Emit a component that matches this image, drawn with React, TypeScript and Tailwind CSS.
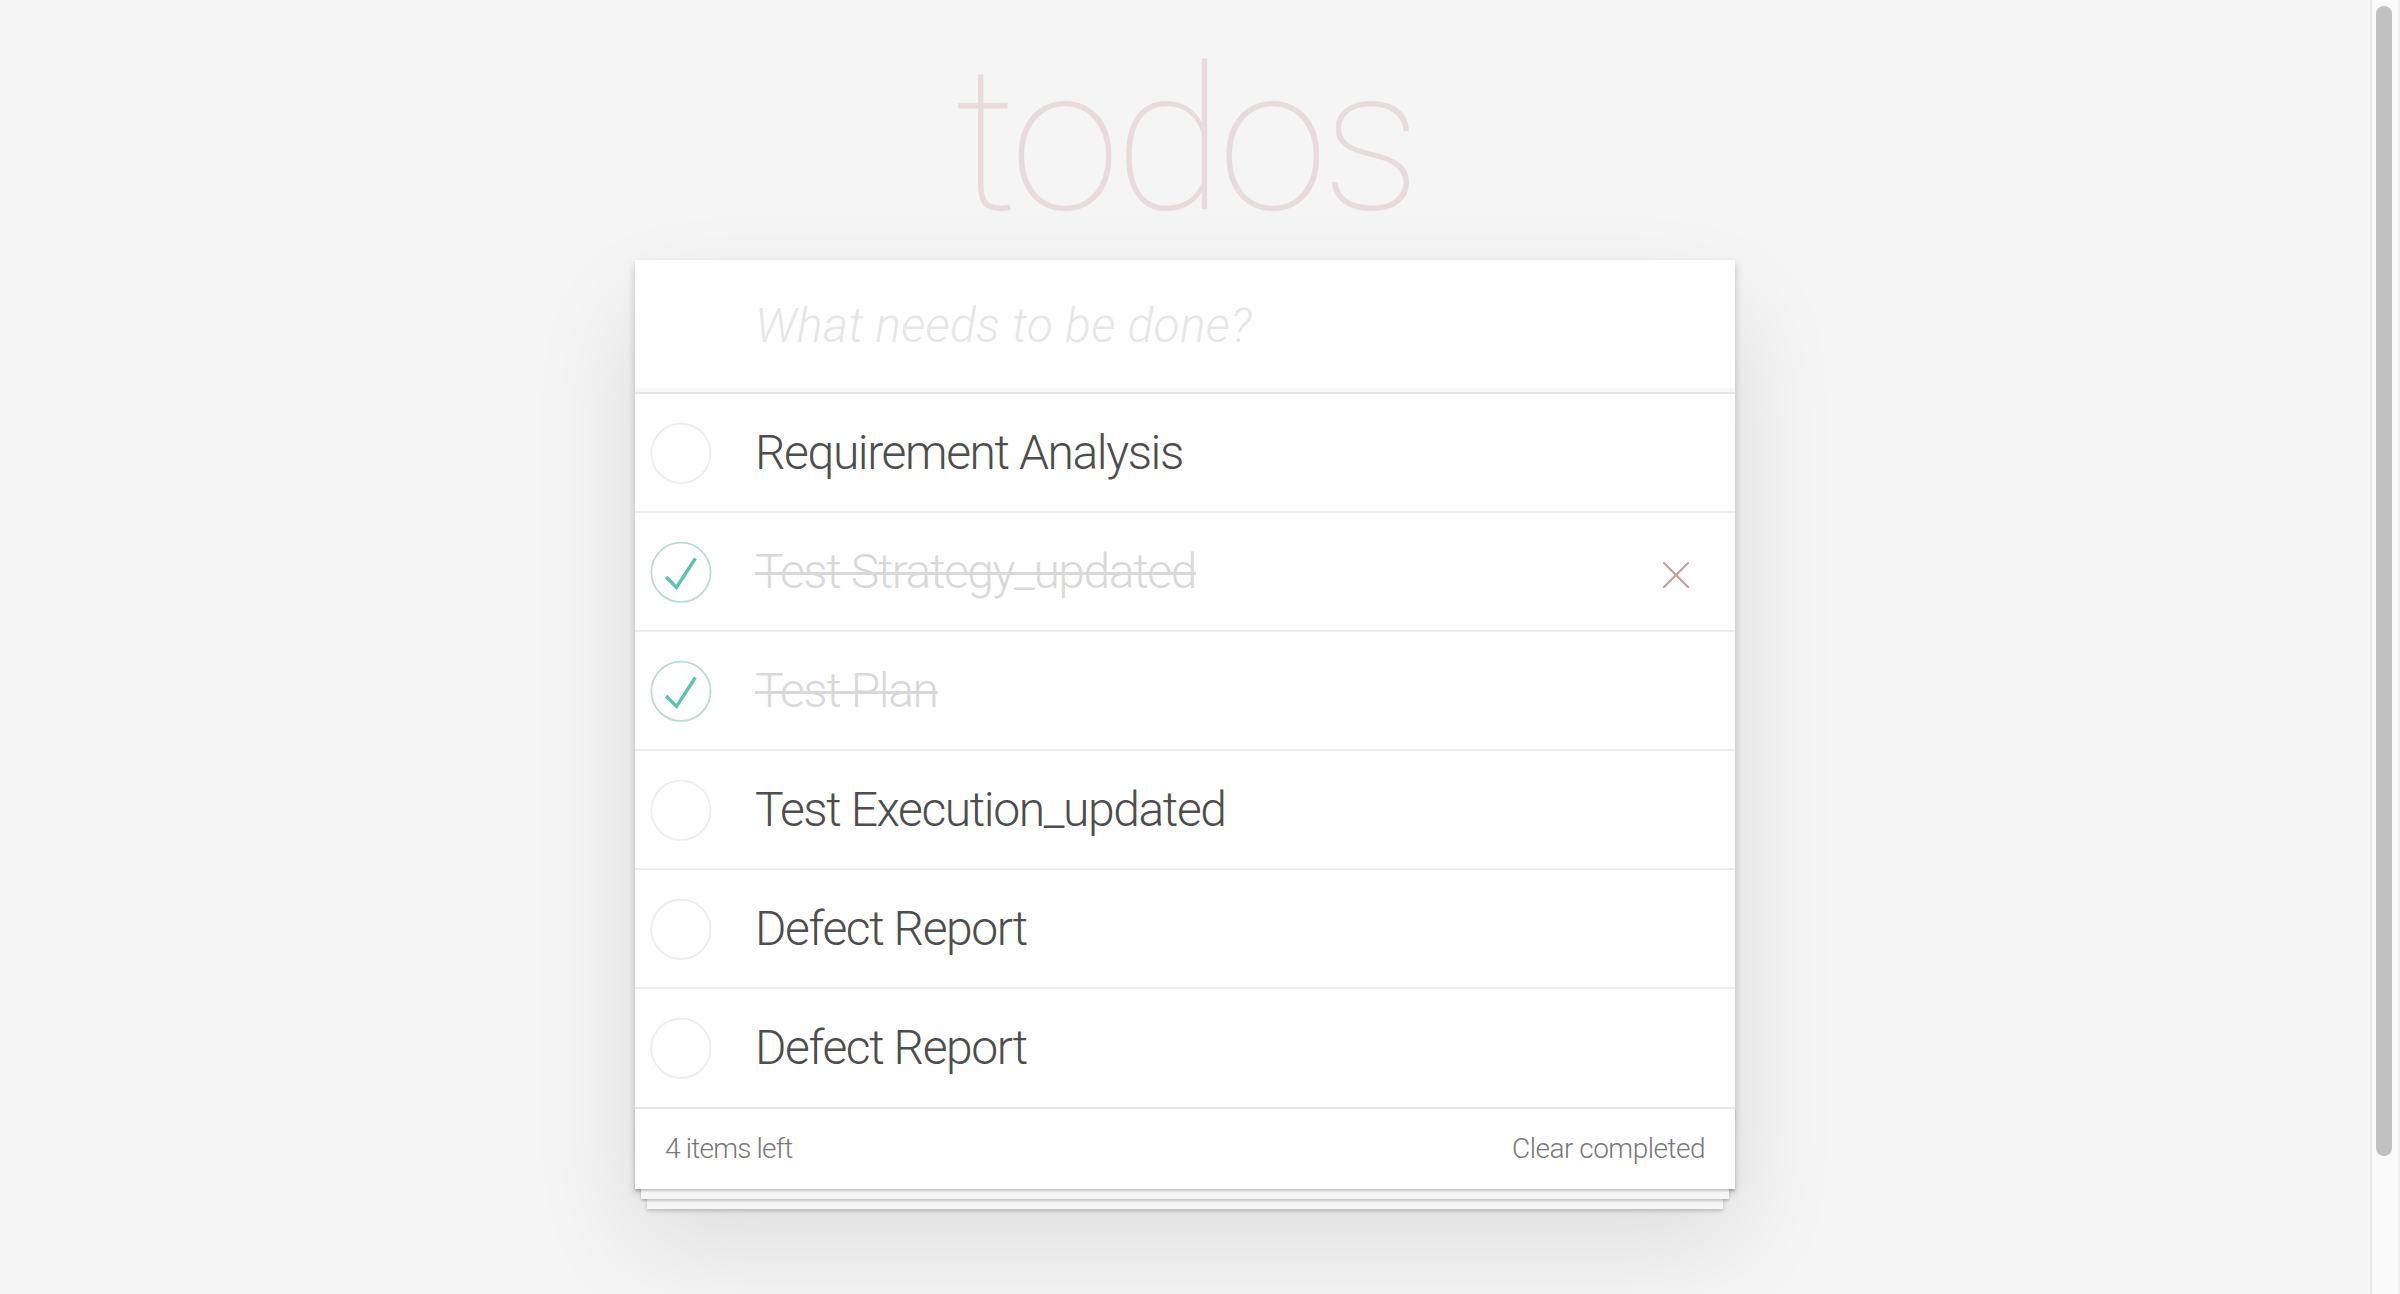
import React from 'react';

interface Todo {
  title: string;
  completed: boolean;
}

const todos: Todo[] = [
  { title: 'Requirement Analysis', completed: false },
  { title: 'Test Strategy_updated', completed: true },
  { title: 'Test Plan', completed: true },
  { title: 'Test Execution_updated', completed: false },
  { title: 'Defect Report', completed: false },
  { title: 'Defect Report', completed: false },
];

// same drawing as the todomvc toggle background, at 2x
const Toggle = ({ checked }: { checked: boolean }) => (
  <svg width="80" height="80" viewBox="-10 -18 100 135" className="shrink-0">
    <circle cx="50" cy="50" r="50" fill="none" stroke={checked ? '#bddad5' : '#ededed'} strokeWidth="3" />
    {checked && <path fill="#5dc2af" d="M72 25L42 71 27 56l-4 4 20 20 34-52z" />}
  </svg>
);

const Destroy = () => (
  <svg width="26" height="26" viewBox="0 0 26 26" className="ml-auto mr-[46px] mt-[6px] shrink-0">
    <path d="M1 1L25 25M25 1L1 25" stroke="#cc9a9a" strokeWidth="2.2" strokeLinecap="round" />
  </svg>
);

const TodoItem = ({ todo, last, hovered }: { todo: Todo; last: boolean; hovered: boolean }) => {
  return (
    <li className={`flex items-center ${last ? 'h-[118px]' : 'h-[119px] border-b-2 border-[#ededed]'}`}>
      <Toggle checked={todo.completed} />
      <label
        className={`pl-[40px] text-[48px] leading-[1.2] font-light tracking-[-1.4px] whitespace-nowrap ${
          todo.completed ? 'text-[#d9d9d9] line-through decoration-[3px] decoration-[#d9d9d9]' : 'text-[#4d4d4d]'
        }`}
      >
        {todo.title}
      </label>
      {hovered && <Destroy />}
    </li>
  );
};

const App = () => {
  const left = todos.filter((t) => !t.completed).length;
  return (
    <div className="flex h-[1294px] overflow-hidden bg-[#f5f5f5] font-['Roboto','Helvetica_Neue',Arial,sans-serif]">
      <main className="flex-1 flex flex-col items-center">
        <h1 className="h-[260px] pt-[41px] text-[200px] leading-[200px] font-thin tracking-[-6px] text-[#e9dbdb] text-center">
          todos
        </h1>
        <section className="w-[1100px] bg-white shadow-[0_4px_8px_0_rgba(0,0,0,0.2),0_50px_100px_0_rgba(0,0,0,0.1)]">
          <div className="h-[132px] flex items-center pl-[120px] pr-[32px] shadow-[inset_0_-4px_2px_rgba(0,0,0,0.03)]">
            <span className="text-[48px] italic font-light tracking-[0.3px] text-[#e6e6e6]">What needs to be done?</span>
          </div>
          <ul className="border-t-2 border-[#e6e6e6]">
            {todos.map((todo, i) => (
              <TodoItem key={i} todo={todo} last={i === todos.length - 1} hovered={i === 1} />
            ))}
          </ul>
          <footer className="h-[82px] flex items-center justify-between px-[30px] border-t-2 border-[#e6e6e6] bg-white text-[28px] font-light text-[#777] shadow-[0_2px_2px_rgba(0,0,0,0.2),0_16px_0_-6px_#f6f6f6,0_18px_2px_-6px_rgba(0,0,0,0.2),0_32px_0_-12px_#f6f6f6,0_34px_4px_-12px_rgba(0,0,0,0.2)]">
            <span className="tracking-[-0.8px]">
              <strong className="font-light">{left}</strong> items left
            </span>
            <span className="tracking-[-0.5px]">Clear completed</span>
          </footer>
        </section>
      </main>
      <div className="w-[30px] shrink-0 bg-[#fafafa] border-l-2 border-r-2 border-l-[#e8e8e8] border-r-[#f0f0f0]">
        <div className="mt-[6px] ml-[4px] h-[1150px] w-[16px] rounded-full bg-[#c1c1c1]" />
      </div>
    </div>
  );
};

export default App;
